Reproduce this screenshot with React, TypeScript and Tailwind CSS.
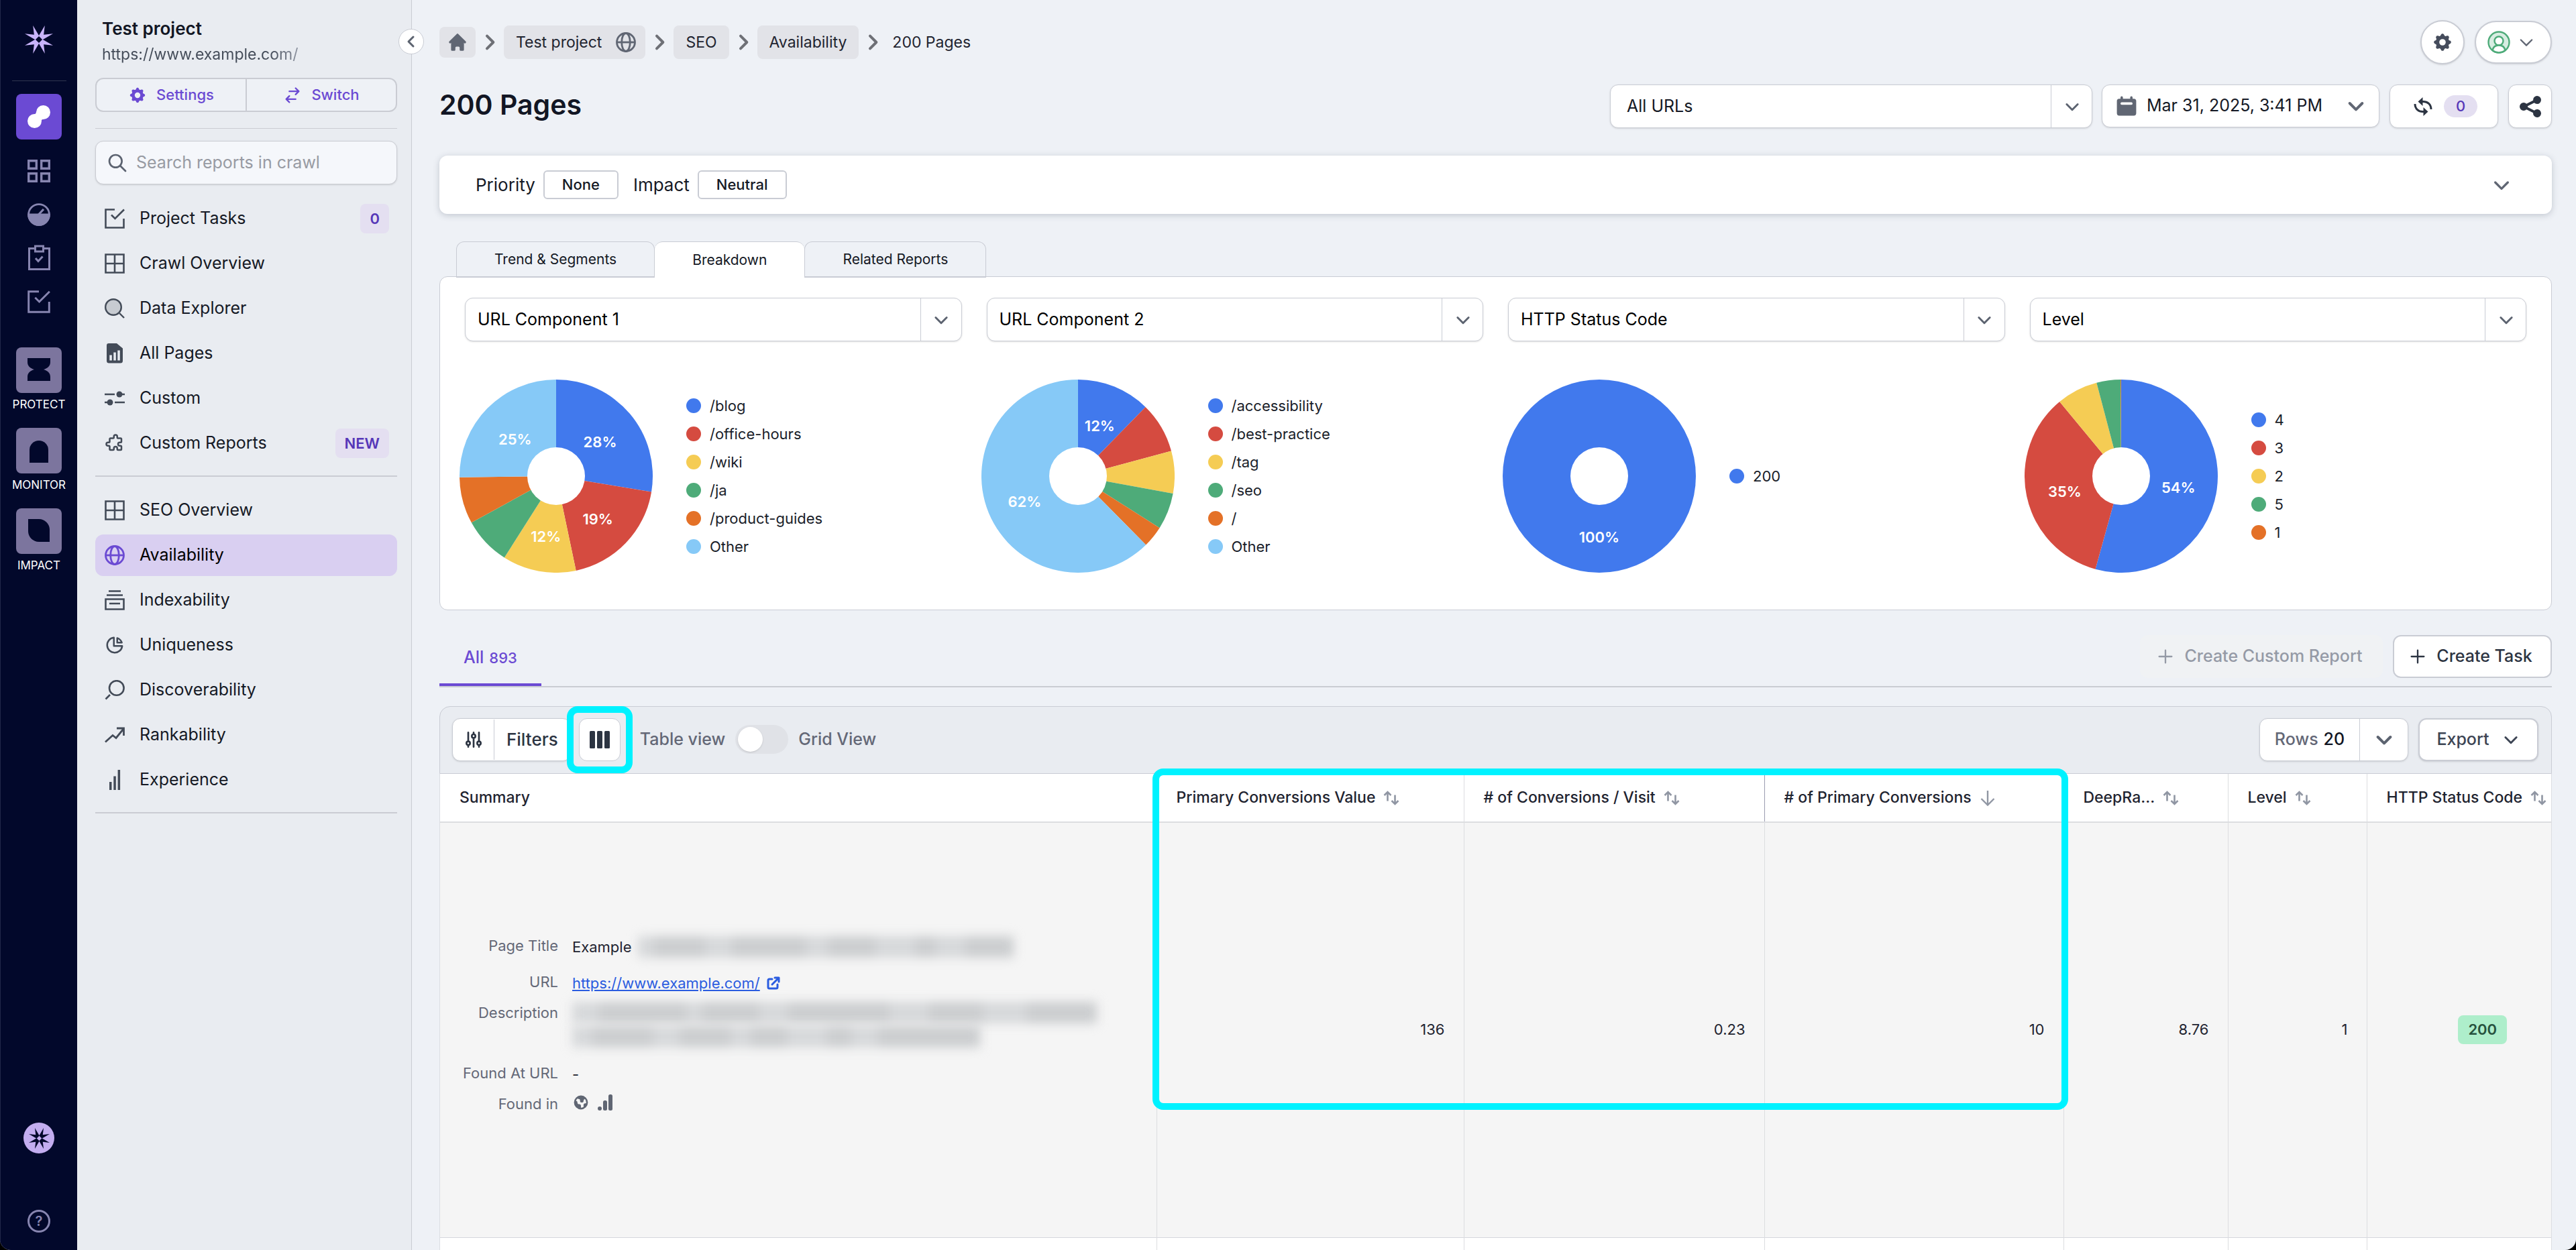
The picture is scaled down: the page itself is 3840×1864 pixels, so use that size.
import { useState } from "react";
import type { ReactNode } from "react";
import clsx from "clsx";
import {
  HiCalendar,
  HiCog,
  HiGlobe,
  HiHome,
  HiOutlineAdjustments,
  HiOutlineChartPie,
  HiOutlineChevronDown,
  HiOutlineChevronLeft,
  HiOutlineChevronRight,
  HiOutlineExternalLink,
  HiOutlinePlus,
  HiOutlinePuzzle,
  HiOutlineSearch,
  HiOutlineSwitchHorizontal,
  HiShare,
} from "react-icons/hi";

const BLUE = "#4179ed";
const RED = "#d54b40";
const YELLOW = "#f5cc54";
const GREEN = "#4eab79";
const ORANGE = "#e47127";
const SKY = "#86c9f7";

type Slice = { name: string; value: number; color: string; label?: string };

const BREAKDOWNS: { title: string; slices: Slice[] }[] = [
  {
    title: "URL Component 1",
    slices: [
      { name: "/blog", value: 27.6, color: BLUE, label: "28%" },
      { name: "/office-hours", value: 19.1, color: RED, label: "19%" },
      { name: "/wiki", value: 12.3, color: YELLOW, label: "12%" },
      { name: "/ja", value: 8, color: GREEN },
      { name: "/product-guides", value: 7.8, color: ORANGE },
      { name: "Other", value: 25.2, color: SKY, label: "25%" },
    ],
  },
  {
    title: "URL Component 2",
    slices: [
      { name: "/accessibility", value: 12.3, color: BLUE, label: "12%" },
      { name: "/best-practice", value: 8.5, color: RED },
      { name: "/tag", value: 7.1, color: YELLOW },
      { name: "/seo", value: 6.1, color: GREEN },
      { name: "/", value: 3.6, color: ORANGE },
      { name: "Other", value: 62.4, color: SKY, label: "62%" },
    ],
  },
  {
    title: "HTTP Status Code",
    slices: [{ name: "200", value: 100, color: BLUE, label: "100%" }],
  },
  {
    title: "Level",
    slices: [
      { name: "4", value: 54.3, color: BLUE, label: "54%" },
      { name: "3", value: 34.7, color: RED, label: "35%" },
      { name: "2", value: 6.9, color: YELLOW },
      { name: "5", value: 4, color: GREEN },
      { name: "1", value: 0.1, color: ORANGE },
    ],
  },
];

const COLUMNS = [
  { name: "Primary Conversions Value", value: "136" },
  { name: "# of Conversions / Visit", value: "0.23" },
  { name: "# of Primary Conversions", value: "10", sorted: true },
  { name: "DeepRa...", value: "8.76" },
  { name: "Level", value: "1" },
  { name: "HTTP Status Code", value: "200", badge: true },
];

/* ---------- icons ---------- */

function StarMark({ className }: { className: string }) {
  return (
    <svg viewBox="-50 -50 100 100" className={className} fill="currentColor">
      <path d="M-21 -50 L0 -14 L21 -50 L17 -17 L50 -21 L14 0 L50 21 L17 17 L21 50 L0 14 L-21 50 L-17 17 L-50 21 L-14 0 L-50 -21 L-17 -17 Z M0 -12 L-12 0 L0 12 L12 0 Z" fillRule="evenodd" />
    </svg>
  );
}

function TaskIcon({ className }: { className: string }) {
  return (
    <svg viewBox="0 0 30 30" className={className} fill="none" stroke="currentColor" strokeWidth="2.6">
      <path d="M15 1.5H1.5v27h27V15" />
      <path d="M10 9.5l5.5 5.5L29 1.5" />
    </svg>
  );
}

function WindowIcon({ className }: { className: string }) {
  return (
    <svg viewBox="0 0 30 30" className={className} fill="none" stroke="currentColor" strokeWidth="2.6">
      <path d="M1.5 1.5h27v27h-27zM15 1.5v27M1.5 15h27" />
    </svg>
  );
}

function ExplorerIcon({ className }: { className: string }) {
  return (
    <svg viewBox="0 0 30 30" className={className} fill="none" stroke="currentColor" strokeWidth="2.4">
      <circle cx="13" cy="13" r="11.8" fill="#c7cbd1" />
      <path d="M22 22l7 7" />
    </svg>
  );
}

function PagesIcon({ className }: { className: string }) {
  return (
    <svg viewBox="0 0 30 30" className={className} fill="currentColor">
      <path
        fillRule="evenodd"
        d="M6 0h12l9 7.5V26a3.5 3.5 0 0 1-3.5 3.5H6.5A3.5 3.5 0 0 1 3 26V3a3 3 0 0 1 3-3zM7.3 17.5v8h3.5v-8zM13.3 13.5v12h3.5v-12zM19.3 10.5v15h3.5v-15z"
      />
    </svg>
  );
}

function SlidersIcon({ className }: { className: string }) {
  return (
    <svg viewBox="0 0 30 30" className={className} fill="none" stroke="currentColor" strokeWidth="2.6">
      <path d="M0 9h15M26 9h4M0 21h4M15 21h15" />
      <circle cx="22" cy="9" r="4.5" fill="currentColor" stroke="none" />
      <circle cx="8" cy="21" r="4.5" fill="currentColor" stroke="none" />
    </svg>
  );
}

function GlobeIcon({ className }: { className: string }) {
  return (
    <svg viewBox="0 0 30 30" className={className} fill="none" stroke="currentColor" strokeWidth="2.8">
      <circle cx="15" cy="15" r="13.5" />
      <ellipse cx="15" cy="15" rx="6.3" ry="13.5" />
      <path d="M1.5 15h27" />
    </svg>
  );
}

function ArchiveIcon({ className }: { className: string }) {
  return (
    <svg viewBox="0 0 30 30" className={className} fill="none" stroke="currentColor" strokeWidth="2.6">
      <path d="M6 1.5h18M3 7.5h24M1.5 13.5h27v15h-27zM7 20h16" />
    </svg>
  );
}

function DiscoverIcon({ className }: { className: string }) {
  return (
    <svg viewBox="0 0 30 30" className={className} fill="none" stroke="currentColor" strokeWidth="2.6">
      <circle cx="17.8" cy="12" r="10.8" />
      <path d="M8 22l-6.5 6.5" />
    </svg>
  );
}

function TrendIcon({ className }: { className: string }) {
  return (
    <svg viewBox="0 0 30 30" className={className} fill="none" stroke="currentColor" strokeWidth="2.8">
      <path d="M1 25.5l11-10 5 4L28 6M18 5h10.5v11" />
    </svg>
  );
}

function BarsIcon({ className }: { className: string }) {
  return (
    <svg viewBox="0 0 30 30" className={className} fill="currentColor">
      <path d="M7 18h3.5v12H7zM13.3 9.5h3.5V30h-3.5zM19.6 0h3.5v30h-3.5z" />
    </svg>
  );
}

function SyncIcon({ className }: { className: string }) {
  return (
    <svg viewBox="0 0 30 28" className={className} fill="none" stroke="currentColor" strokeWidth="3">
      <path d="M12 6.5h3.500c6 0 11.500 4 11.500 11.500M18 21.500h-3.500C8.500 21.500 3 17.500 3 10" />
      <path d="M14.500 0v13L7.500 6.500zM15.500 15v13l7-6.500z" fill="currentColor" stroke="none" />
    </svg>
  );
}

function SortIcon() {
  return (
    <svg viewBox="0 0 24 24" className="size-6 shrink-0 text-[#9096a3]" fill="none" stroke="currentColor" strokeWidth="2.6">
      <path d="M6.5 16.5V3.5M1.5 8l5-5 5 5M17.5 7.5v13M12.5 16l5 5 5-5" />
    </svg>
  );
}

/* ---------- shared bits ---------- */

const RAIL_SECTIONS = [
  { name: "PROTECT", shape: "M0 0h34v6c0 6-4 9-10 11c6 2 10 5 10 11v6H0v-6c0-6 4-9 10-11C4 15 0 12 0 6z" },
  { name: "MONITOR", shape: "M3 36V17a14 14 0 0 1 28 0v19z" },
  { name: "IMPACT", shape: "M1 0h16a16 16 0 0 1 16 16v18H17A16 16 0 0 1 1 18z" },
];

function RailNav() {
  return (
    <nav className="flex w-[115px] shrink-0 flex-col items-center border-l border-[#22284a] bg-[#02082b] text-[#8785b0]">
      <StarMark className="mt-[38px] size-[42px] text-[#c9b4fa]" />
      <div className="mt-10 h-px w-[81px] bg-[#30364f]" />
      <a href="#analyze" aria-label="Analyze" className="mt-[19px] flex size-[68px] items-center justify-center rounded-lg bg-[#6b4ad3] text-white">
        <svg viewBox="0 0 34 34" className="size-[34px]" fill="currentColor">
          <circle cx="23.5" cy="10.5" r="10.5" />
          <circle cx="10.5" cy="23.5" r="10.5" />
          <path d="M13 9c0 3-1 4.5-5 5l12 11.500c0-3 1-4.500 5-5z" />
        </svg>
      </a>
      <div className="mt-[30px] flex flex-col items-center gap-[31px]">
        <a href="#dashboards" aria-label="Dashboards">
          <svg viewBox="0 0 34 34" className="size-[34px]" fill="none" stroke="currentColor" strokeWidth="3.4">
            <path d="M1.7 1.7h11.6v11.6H1.7zM20.7 1.7h11.6v11.6H20.7zM1.7 20.7h11.6v11.6H1.7zM20.7 20.7h11.6v11.6H20.7z" />
          </svg>
        </a>
        <a href="#performance" aria-label="Performance">
          <svg viewBox="0 0 34 34" className="size-[34px]" fill="none" stroke="currentColor" strokeWidth="2.8">
            <circle cx="17" cy="17" r="15.4" />
            <path d="M1.5 17a15.500 15.500 0 0 0 31 0z" fill="currentColor" />
            <path d="M15.5 18L24 9" strokeWidth="3.2" />
          </svg>
        </a>
        <a href="#plans" aria-label="Plans">
          <svg viewBox="0 0 34 34" className="size-[34px] overflow-visible" fill="none" stroke="currentColor" strokeWidth="3">
            <path d="M10 2.5H2.5v31h30v-31H25M11.5 -1h12v8h-12zM12 17l4 4.5 6.5-7" />
          </svg>
        </a>
        <a href="#tasks" aria-label="Tasks">
          <TaskIcon className="size-[34px]" />
        </a>
      </div>
      <div className="mt-[51px] flex flex-col items-center gap-[17px]">
        {RAIL_SECTIONS.map((s) => (
          <a key={s.name} href={`#${s.name.toLowerCase()}`} className="flex flex-col items-center text-[17px] leading-[35px] text-white">
            <span className="flex size-[68px] items-center justify-center rounded-lg bg-[#7c759e]">
              <svg viewBox="0 0 34 36" className="h-9 w-[34px]" fill="#02082b">
                <path d={s.shape} />
              </svg>
            </span>
            {s.name}
          </a>
        ))}
      </div>
      <div className="mt-auto mb-[26px] flex flex-col items-center gap-[84px]">
        <button type="button" aria-label="Assistant" className="flex size-[46px] items-center justify-center rounded-full bg-[#c3adf0] text-[#02082b]">
          <StarMark className="size-[31px]" />
        </button>
        <a href="#help" aria-label="Help" className="flex size-[34px] items-center justify-center rounded-full border-3 border-[#8785b0] text-[20px] leading-none font-semibold">
          ?
        </a>
      </div>
    </nav>
  );
}

function NavItem({ icon, label, badge, active }: { icon: ReactNode; label: string; badge?: string; active?: boolean }) {
  return (
    <li>
      <a
        href="#report"
        className={clsx(
          "flex h-[62px] items-center rounded-xl pr-3 pl-[14px]",
          active ? "bg-[#d9cff1] text-black [&>svg]:text-[#6b4ad3]" : "text-[#151925] [&>svg]:text-[#434b58]",
        )}
      >
        {icon}
        <span className="ml-[22px] flex-1">{label}</span>
        {badge && (
          <span className="flex h-11 items-center rounded-lg bg-[#e4dff1] px-[14px] text-[22px] font-semibold text-[#5637b8]">{badge}</span>
        )}
      </a>
    </li>
  );
}

function Sidebar() {
  const icon = "size-[30px] shrink-0";
  return (
    <aside className="relative flex w-[499px] shrink-0 flex-col border-r border-[#c9ccd4] bg-[#e9ecf1] pt-[25px] pr-[21px] pl-[27px] text-[25px]">
      <div className="px-[10px]">
        <h2 className="text-[26px] leading-9 font-semibold text-[#121624]">Test project</h2>
        <p className="mt-1 w-fit bg-linear-to-r from-[#434b58] from-85% to-[#8d93a0] bg-clip-text text-[23px] leading-8 text-transparent">
          https://www.example.com/
        </p>
      </div>
      <div className="mt-[19px] flex h-[51px] rounded-xl border-2 border-[#caccd3] bg-[#eef1f6] text-[22px] font-medium text-[#6b4ad3]">
        <button type="button" className="flex flex-1 items-center justify-center gap-[14px] border-r-2 border-[#caccd3]">
          <HiCog className="size-7" />
          Settings
        </button>
        <button type="button" className="flex flex-1 items-center justify-center gap-[14px]">
          <HiOutlineSwitchHorizontal className="size-7" />
          Switch
        </button>
      </div>
      <hr className="mt-6 border-[#caccd3]" />
      <div className="mt-[18px] flex h-[65px] items-center rounded-xl border border-[#caccd3] bg-[#f5f7fb] px-4 shadow-sm">
        <HiOutlineSearch className="size-8 shrink-0 text-[#5c6370]" />
        <input
          type="search"
          aria-label="Search reports in crawl"
          placeholder="Search reports in crawl"
          className="ml-3 w-full bg-transparent outline-none placeholder:text-[#989ba3]"
        />
      </div>
      <ul className="mt-5 flex flex-col gap-[5px]">
        <NavItem icon={<TaskIcon className={icon} />} label="Project Tasks" badge="0" />
        <NavItem icon={<WindowIcon className={icon} />} label="Crawl Overview" />
        <NavItem icon={<ExplorerIcon className={icon} />} label="Data Explorer" />
        <NavItem icon={<PagesIcon className={icon} />} label="All Pages" />
        <NavItem icon={<SlidersIcon className={icon} />} label="Custom" />
        <NavItem icon={<HiOutlinePuzzle className={icon} />} label="Custom Reports" badge="NEW" />
      </ul>
      <hr className="mt-[17px] border-t-2 border-[#caccd3]" />
      <ul className="mt-[19px] flex flex-col gap-[5px]">
        <NavItem icon={<WindowIcon className={icon} />} label="SEO Overview" />
        <NavItem icon={<GlobeIcon className={icon} />} label="Availability" active />
        <NavItem icon={<ArchiveIcon className={icon} />} label="Indexability" />
        <NavItem icon={<HiOutlineChartPie className={icon} />} label="Uniqueness" />
        <NavItem icon={<DiscoverIcon className={icon} />} label="Discoverability" />
        <NavItem icon={<TrendIcon className={icon} />} label="Rankability" />
        <NavItem icon={<BarsIcon className={icon} />} label="Experience" />
      </ul>
      <hr className="mt-[17px] border-t-2 border-[#caccd3]" />
      <button
        type="button"
        aria-label="Collapse sidebar"
        className="absolute top-[43px] -right-[19px] z-10 flex size-[38px] items-center justify-center rounded-full border border-[#c9ccd4] bg-white text-[#5c6370]"
      >
        <HiOutlineChevronLeft className="size-6 [&>path]:[stroke-width:3]" />
      </button>
    </aside>
  );
}

function SelectBox({ label, className }: { label: string; className?: string }) {
  return (
    <div className={clsx("relative text-[25px]", className)}>
      <select aria-label={label} className="h-[65px] w-full appearance-none rounded-xl border border-[#c9ccd4] bg-white pr-20 pl-[18px] shadow-sm">
        <option>{label}</option>
      </select>
      <span className="pointer-events-none absolute inset-y-0 right-0 flex w-[62px] items-center justify-center border-l border-[#c9ccd4] text-[#5c6370]">
        <HiOutlineChevronDown className="size-7 [&>path]:[stroke-width:2.5]" />
      </span>
    </div>
  );
}

function Crumb({ children }: { children: ReactNode }) {
  return (
    <a href="#crumb" className="flex h-[50px] items-center gap-[21px] rounded-lg bg-[#e2e3e8] px-[18px]">
      {children}
    </a>
  );
}

function Header() {
  const sep = <HiOutlineChevronRight className="mx-[5px] size-8 text-[#6e7076] [&>path]:[stroke-width:3]" />;
  return (
    <header>
      <div className="flex h-16 items-center text-[23px] text-[#1f2430]">
        <nav aria-label="Breadcrumb" className="flex flex-1 items-center">
          <a href="#home" aria-label="Home" className="flex h-[46px] w-[54px] items-center justify-center rounded-lg bg-[#e2e3e8] text-[#606673]">
            <HiHome className="size-8" />
          </a>
          {sep}
          <Crumb>
            Test project
            <GlobeIcon className="-mr-1 size-[30px] text-[#606673]" />
          </Crumb>
          {sep}
          <Crumb>SEO</Crumb>
          {sep}
          <Crumb>Availability</Crumb>
          {sep}
          <span className="ml-2">200 Pages</span>
        </nav>
        <button type="button" aria-label="Account settings" className="flex size-[66px] items-center justify-center rounded-full border-2 border-[#c9ccd4] bg-white text-[#454c5c] shadow-sm">
          <HiCog className="size-8" />
        </button>
        <button type="button" aria-label="User menu" className="ml-[15px] flex h-16 w-[115px] items-center gap-[10px] rounded-full border-2 border-[#c9ccd4] bg-white px-[17px] text-[#606673] shadow-sm">
          <svg viewBox="0 0 34 34" className="size-[34px]" fill="none" stroke="#4eab79" strokeWidth="2.4">
            <circle cx="17" cy="17" r="15.5" fill="#d8ede2" />
            <circle cx="17" cy="15" r="6.5" fill="#fff" />
            <path d="M7.5 29c1-5 4.5-7.5 9.5-7.5s8.500 2.500 9.500 7.500c-5 4.500-14 4.500-19 0z" fill="#fff" />
          </svg>
          <HiOutlineChevronDown className="size-7" />
        </button>
      </div>
      <div className="mt-[31px] flex h-[65px] items-start text-[25px] text-[#151925]">
        <h1 className="flex-1 text-[41px] leading-[60px] font-semibold text-[#121624]">200 Pages</h1>
        <SelectBox label="All URLs" className="w-[719px] [&>select]:pl-6" />
        <button type="button" className="ml-[14px] flex h-16 w-[414px] items-center rounded-xl border border-[#c9ccd4] bg-white px-[18px] shadow-sm">
          <HiCalendar className="size-9 text-[#606673]" />
          <span className="ml-3 flex-1 text-left">Mar 31, 2025, 3:41 PM</span>
          <HiOutlineChevronDown className="size-8 text-[#606673] [&>path]:[stroke-width:3]" />
        </button>
        <button type="button" aria-label="Running tasks" className="ml-[15px] flex h-[65px] w-[162px] items-center justify-center gap-4 rounded-xl border border-[#c9ccd4] bg-white pl-1 shadow-sm">
          <SyncIcon className="h-7 w-[30px] text-[#2c3442]" />
          <span className="flex h-[33px] w-[50px] items-center justify-center rounded-full bg-[#e4dff1] text-[22px] font-medium text-[#5637b8]">0</span>
        </button>
        <button type="button" aria-label="Share" className="ml-[15px] flex size-[65px] items-center justify-center rounded-xl border border-[#c9ccd4] bg-white text-[#2c3442] shadow-sm">
          <HiShare className="size-10" />
        </button>
      </div>
    </header>
  );
}

function PieChart({ slices }: { slices: Slice[] }) {
  const R = 144;
  const r = 43;
  const at = (radius: number, pct: number) => {
    const a = (pct / 100) * Math.PI * 2;
    return [radius * Math.sin(a), -radius * Math.cos(a)] as const;
  };
  let total = 0;
  const parts = slices.map((s) => {
    const start = total;
    total += s.value;
    return { ...s, start, end: total };
  });
  return (
    <svg viewBox="-144 -144 288 288" className="size-72 shrink-0">
      {parts.map((p) => {
        if (p.value >= 100) return <circle key={p.name} r={R} fill={p.color} />;
        const [x1, y1] = at(R, p.start);
        const [x2, y2] = at(R, p.end);
        return <path key={p.name} d={`M0 0L${x1} ${y1}A${R} ${R} 0 ${p.value > 50 ? 1 : 0} 1 ${x2} ${y2}Z`} fill={p.color} />;
      })}
      <circle r={r} fill="#fff" />
      {parts.map((p) => {
        if (!p.label) return null;
        const [x, y] = at(86, (p.start + p.end) / 2);
        return (
          <text key={p.name} x={x} y={y + 13} textAnchor="middle" className="fill-white text-[22px] font-semibold">
            {p.label}
          </text>
        );
      })}
    </svg>
  );
}

function BreakdownPanel() {
  const tabs = ["Trend & Segments", "Breakdown", "Related Reports"];
  const [tab, setTab] = useState("Breakdown");
  return (
    <section className="mt-[41px]">
      <div role="tablist" className="relative z-10 flex px-[25px]">
        {tabs.map((t) => (
          <button
            key={t}
            type="button"
            role="tab"
            aria-selected={tab === t}
            onClick={() => setTab(t)}
            className={clsx(
              "h-[54px] rounded-t-xl border border-[#c9ccd4] px-14 text-[21px] text-[#151925]",
              tab === t ? "border-x-0 border-b-0 bg-white" : "border-b-2 bg-[#eef1f6]",
            )}
          >
            {t}
          </button>
        ))}
      </div>
      <div className="-mt-0.5 grid h-[498px] grid-cols-4 gap-[37px] rounded-xl border border-[#c9ccd4] bg-white px-[37px] pt-[31px]">
        {BREAKDOWNS.map((b) => (
          <div key={b.title}>
            <SelectBox label={b.title} />
            <div className="mt-[57px] -ml-2 flex items-center">
              <PieChart slices={b.slices} />
              <ul className="ml-[50px] text-[22px] leading-[42px] text-[#1a1e2a]">
                {b.slices.map((s) => (
                  <li key={s.name} className="flex items-center gap-[13px]">
                    <span className="size-[22px] rounded-full" style={{ backgroundColor: s.color }} />
                    {s.name}
                  </li>
                ))}
              </ul>
            </div>
          </div>
        ))}
      </div>
    </section>
  );
}

function Toolbar() {
  const [grid, setGrid] = useState(false);
  return (
    <div className="flex h-[101px] items-center rounded-t-2xl border border-[#c9ccd4] bg-[#e9ecf1] pr-[19px] pb-0.5 pl-[18px] text-[25px] font-medium">
      <button type="button" className="flex h-16 items-center rounded-xl border border-[#c9ccd4] bg-white text-[#2c3442] shadow-sm">
        <span className="flex h-[60px] w-[62px] items-center justify-center border-r border-[#c9ccd4]">
          <HiOutlineAdjustments className="size-8" />
        </span>
        <span className="px-[18px] text-[26px]">Filters</span>
      </button>
      <div className="relative ml-3">
        <button type="button" aria-label="Columns" className="flex h-16 w-[62px] items-center justify-center rounded-xl border border-[#c9ccd4] bg-white text-[#2c3442]">
          <svg viewBox="0 0 30 26" className="h-[26px] w-[30px]" fill="currentColor">
            <rect width="8" height="26" rx="1.5" />
            <rect x="11" width="8" height="26" rx="1.5" />
            <rect x="22" width="8" height="26" rx="1.5" />
          </svg>
        </button>
        <span className="pointer-events-none absolute -inset-[18px] z-20 rounded-2xl border-10 border-[#00f2ff]" />
      </div>
      <label className="ml-[29px] flex items-center gap-[15px] text-[#646877]">
        Table view
        <input type="checkbox" role="switch" checked={grid} onChange={(e) => setGrid(e.target.checked)} className="peer sr-only" />
        <span className="flex h-[43px] w-[79px] items-center rounded-full bg-[#e0e2e7] px-1 peer-checked:justify-end">
          <span className="size-[37px] rounded-full bg-white shadow-sm" />
        </span>
        Grid View
      </label>
      <button type="button" className="ml-auto flex h-16 w-[222px] items-center rounded-xl border border-[#c9ccd4] bg-white shadow-sm">
        <span className="flex h-full flex-1 items-center justify-center gap-2 border-r border-[#c9ccd4] text-[#646877]">
          Rows <span className="text-[#121624]">20</span>
        </span>
        <span className="flex w-[71px] justify-center text-[#5c6370]">
          <HiOutlineChevronDown className="size-8 [&>path]:[stroke-width:3]" />
        </span>
      </button>
      <button type="button" className="ml-[15px] flex h-16 w-[179px] items-center justify-center gap-[18px] rounded-xl border-2 border-[#c9ccd4] bg-white text-[#3d4554] shadow-sm">
        Export
        <HiOutlineChevronDown className="size-7 [&>path]:[stroke-width:2.5]" />
      </button>
    </div>
  );
}

/* redacted words, shown as a soft grey smear */
function Redacted({ words, className }: { words: number[]; className?: string }) {
  return (
    <span className={clsx("flex blur-[8px]", className)}>
      {words.map((w, i) => (
        <span key={i} className={clsx("h-8", i % 2 ? "bg-[#cbcdcf]" : "bg-[#d6d8da]")} style={{ width: w }} />
      ))}
    </span>
  );
}

function SummaryCell() {
  const dt = "text-right text-[#646877]";
  return (
    <dl className="grid grid-cols-[146px_1fr] gap-x-[21px] text-[22px] leading-8 text-[#1f2430]">
      <dt className={dt}>Page Title</dt>
      <dd className="flex items-center gap-2.5 pt-0.5">
        Example
        <Redacted words={[24, 76, 40, 110, 34, 70, 60, 30, 44, 72]} />
      </dd>
      <dt className={clsx(dt, "mt-5")}>URL</dt>
      <dd className="mt-5 flex items-center gap-2 pt-0.5">
        <a href="https://www.example.com/" className="text-[#2a5ce0] underline">
          https://www.example.com/
        </a>
        <HiOutlineExternalLink className="size-6 text-[#2a5ce0] [&>path]:[stroke-width:3]" />
      </dd>
      <dt className={clsx(dt, "mt-3")}>Description</dt>
      <dd className="mt-3">
        <Redacted words={[40, 130, 24, 84, 44, 150, 60, 80, 66, 104]} />
        <Redacted words={[30, 90, 40, 76, 30, 54, 60, 36, 40, 152]} className="mt-1" />
      </dd>
      <dt className={clsx(dt, "mt-[22px]")}>Found At URL</dt>
      <dd className="mt-[22px] pt-0.5">-</dd>
      <dt className={clsx(dt, "mt-3")}>Found in</dt>
      <dd className="mt-2 flex items-center gap-3 text-[#606673]">
        <HiGlobe className="size-[26px]" />
        <svg viewBox="0 0 22 24" className="h-6 w-[22px]" fill="currentColor">
          <rect y="18" width="6" height="6" rx="3" />
          <rect x="8" y="9" width="6" height="15" rx="2.5" />
          <rect x="16" width="6" height="24" rx="2.5" />
        </svg>
      </dd>
    </dl>
  );
}

function ReportTable() {
  return (
    <div className="relative">
      <div className="overflow-hidden border-x border-[#dcdee3]">
        <table className="w-[calc(100%+70px)] table-fixed border-collapse bg-white text-left text-[#1f2430]">
          <colgroup>
            <col />
            <col className="w-[458px]" />
            <col className="w-[448px]" />
            <col className="w-[446px]" />
            <col className="w-[245px]" />
            <col className="w-[207px]" />
            <col className="w-[345px]" />
          </colgroup>
          <thead>
            <tr className="h-[72px] border-b-2 border-[#dcdde0] text-[23px]">
              <th className="pl-[29px] font-medium">Summary</th>
              {COLUMNS.map((c) => (
                <th key={c.name} className={clsx("border-l pl-[29px] font-medium", c.sorted ? "border-[#9a9cb0]" : "border-[#dcdde0]")}>
                  <span className="flex items-center gap-3 whitespace-nowrap">
                    {c.name}
                    {c.sorted ? (
                      <svg viewBox="0 0 24 24" className="size-6 shrink-0 text-[#9096a3]" fill="none" stroke="currentColor" strokeWidth="2.4">
                        <path d="M12 1v21M2.5 13l9.5 9.5 9.5-9.5" />
                      </svg>
                    ) : (
                      <SortIcon />
                    )}
                  </span>
                </th>
              ))}
            </tr>
          </thead>
          <tbody>
            <tr className="h-[619px] border-b border-[#d5d7dc] bg-[#f5f5f5] text-[22px]">
              <td className="pr-8 pb-4 pl-[30px] align-middle">
                <SummaryCell />
              </td>
              {COLUMNS.map((c) => (
                <td key={c.name} className={clsx("border-l border-[#dcdde0] px-7", c.badge ? "text-center" : "text-right")}>
                  {c.badge ? (
                    <span className="inline-flex h-[43px] items-center rounded-lg bg-[#aeeecb] px-[15px] font-semibold text-[#27523e]">{c.value}</span>
                  ) : (
                    c.value
                  )}
                </td>
              ))}
            </tr>
            <tr className="h-[619px]">
              <td />
              {COLUMNS.map((c) => (
                <td key={c.name} className="border-l border-[#dcdde0]" />
              ))}
            </tr>
          </tbody>
        </table>
      </div>
      <span className="pointer-events-none absolute -top-2 right-[721px] z-20 h-[509px] w-[1365px] rounded-2xl border-10 border-[#00f2ff]" />
    </div>
  );
}

export default function App() {
  return (
    <div className="h-screen bg-black font-[Inter,'Liberation_Sans',sans-serif]">
      <div className="flex h-full overflow-hidden rounded-b-[16px] bg-[#eef1f6]">
        <RailNav />
        <Sidebar />
        <main className="min-w-0 flex-1 pt-[31px] pr-9 pl-[41px]">
          <Header />
          <section className="mt-[41px] flex h-[87px] items-center rounded-xl bg-white pr-[59px] pl-[54px] text-[26px] text-[#151925] shadow-[0_2px_10px_rgba(60,70,90,0.25)]">
            Priority
            <span className="mr-[22px] ml-3 flex h-[43px] items-center rounded-md border-2 border-[#c9ccd4] px-[26px] text-[22px] font-medium">None</span>
            Impact
            <span className="ml-3 flex h-[43px] items-center rounded-md border-2 border-[#c9ccd4] px-[26px] text-[22px] font-medium">Neutral</span>
            <button type="button" aria-label="Expand details" className="ml-auto text-[#606673]">
              <HiOutlineChevronDown className="size-8 [&>path]:[stroke-width:2.5]" />
            </button>
          </section>
          <BreakdownPanel />
          <div className="mt-[37px] flex h-[78px] items-start border-b-2 border-[#caccd3] text-[25px] font-medium">
            <a href="#all" className="flex h-[76px] items-center border-b-4 border-[#6b4ad3] px-9 pb-1 text-[#6b4ad3]">
              All <span className="ml-2 text-[22px]">893</span>
            </a>
            <button type="button" disabled className="ml-auto flex h-16 w-[362px] items-center justify-center gap-[14px] rounded-xl bg-[#f0f2f4] pr-1.5 text-[#959aa6]">
              <HiOutlinePlus className="size-7" />
              Create Custom Report
            </button>
            <button type="button" className="ml-[15px] flex h-16 w-[237px] items-center justify-center gap-[14px] rounded-xl border-2 border-[#c9ccd4] bg-white pr-1.5 text-[#2c3442]">
              <HiOutlinePlus className="size-7" />
              Create Task
            </button>
          </div>
          <div className="mt-7">
            <Toolbar />
            <ReportTable />
          </div>
        </main>
      </div>
    </div>
  );
}
